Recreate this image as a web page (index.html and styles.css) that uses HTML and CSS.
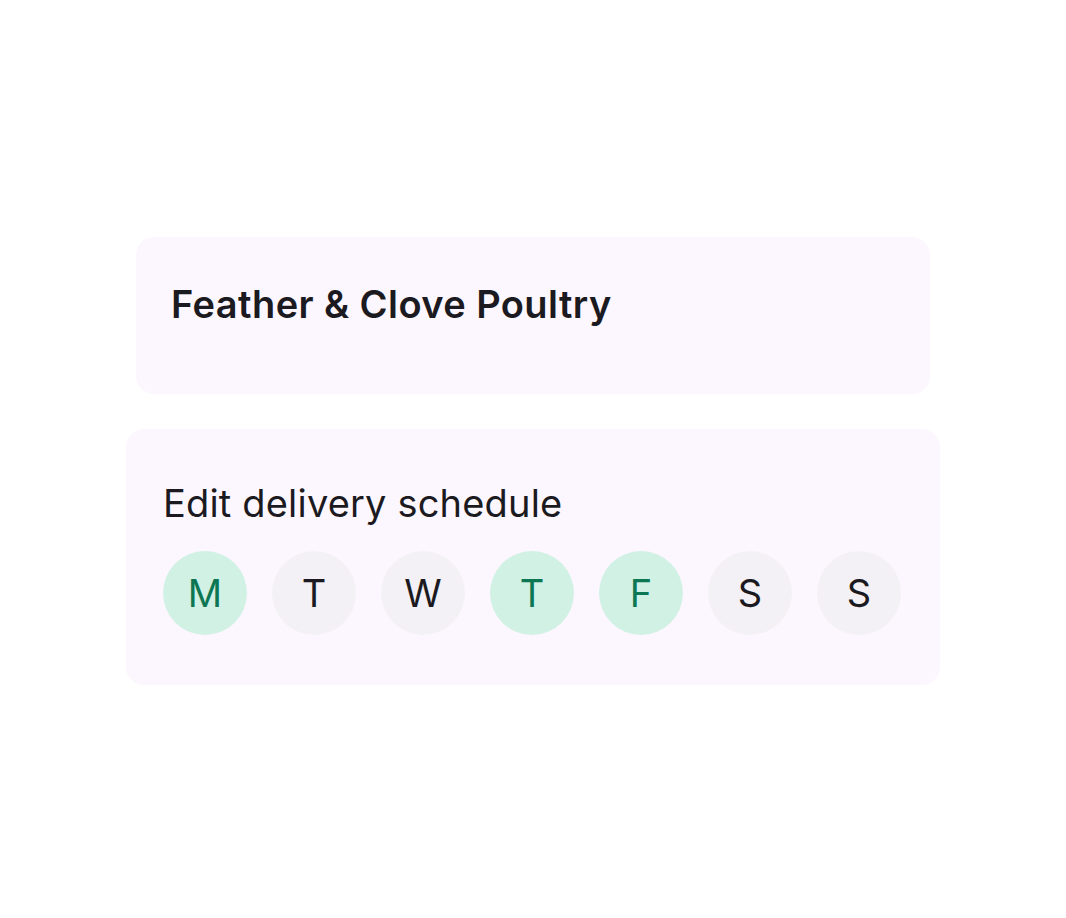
FILE: index.html
```html
<!DOCTYPE html>
<html>
<head>
<meta charset="utf-8">
<link rel="stylesheet" href="styles.css">
</head>
<body>
<main class="page">
  <section class="card card-vendor">
    <h1 class="vendor-name">Feather &amp; Clove Poultry</h1>
  </section>
  <section class="card card-schedule">
    <h2 class="schedule-title">Edit delivery schedule</h2>
    <div class="days">
      <span class="day on">M</span>
      <span class="day">T</span>
      <span class="day">W</span>
      <span class="day on">T</span>
      <span class="day on">F</span>
      <span class="day">S</span>
      <span class="day">S</span>
    </div>
  </section>
</main>
</body>
</html>
```
FILE: styles.css
```css
html, body {
  margin: 0;
  padding: 0;
  background: #ffffff;
}
body {
  font-family: Inter, "Noto Sans", sans-serif;
  color: #1c1a21;
}
.page {
  display: flex;
  flex-direction: column;
  padding-top: 237px;
}
.card {
  background: #fcf7fe;
  border-radius: 18px;
  box-sizing: border-box;
}
.card-vendor {
  margin-left: 136px;
  width: 794px;
  height: 157px;
  padding: 44px 35px 0;
}
.vendor-name {
  margin: 0;
  font-size: 38px;
  font-weight: 600;
  line-height: 46px;
  letter-spacing: 0.42px;
}
.card-schedule {
  margin-left: 126px;
  margin-top: 35px;
  width: 814px;
  height: 256px;
  padding: 51px 37px 0;
}
.schedule-title {
  margin: 0;
  font-size: 38px;
  font-weight: 400;
  line-height: 46px;
  letter-spacing: 0.18px;
}
.days {
  display: flex;
  gap: 25px;
  margin-top: 25px;
}
.day {
  width: 84px;
  height: 84px;
  border-radius: 50%;
  background: #f3f1f6;
  display: flex;
  align-items: center;
  justify-content: center;
  font-size: 38px;
  font-weight: 400;
  color: #1c1a21;
}
.day.on {
  background: #d1f1e4;
  color: #0d7653;
}
```
